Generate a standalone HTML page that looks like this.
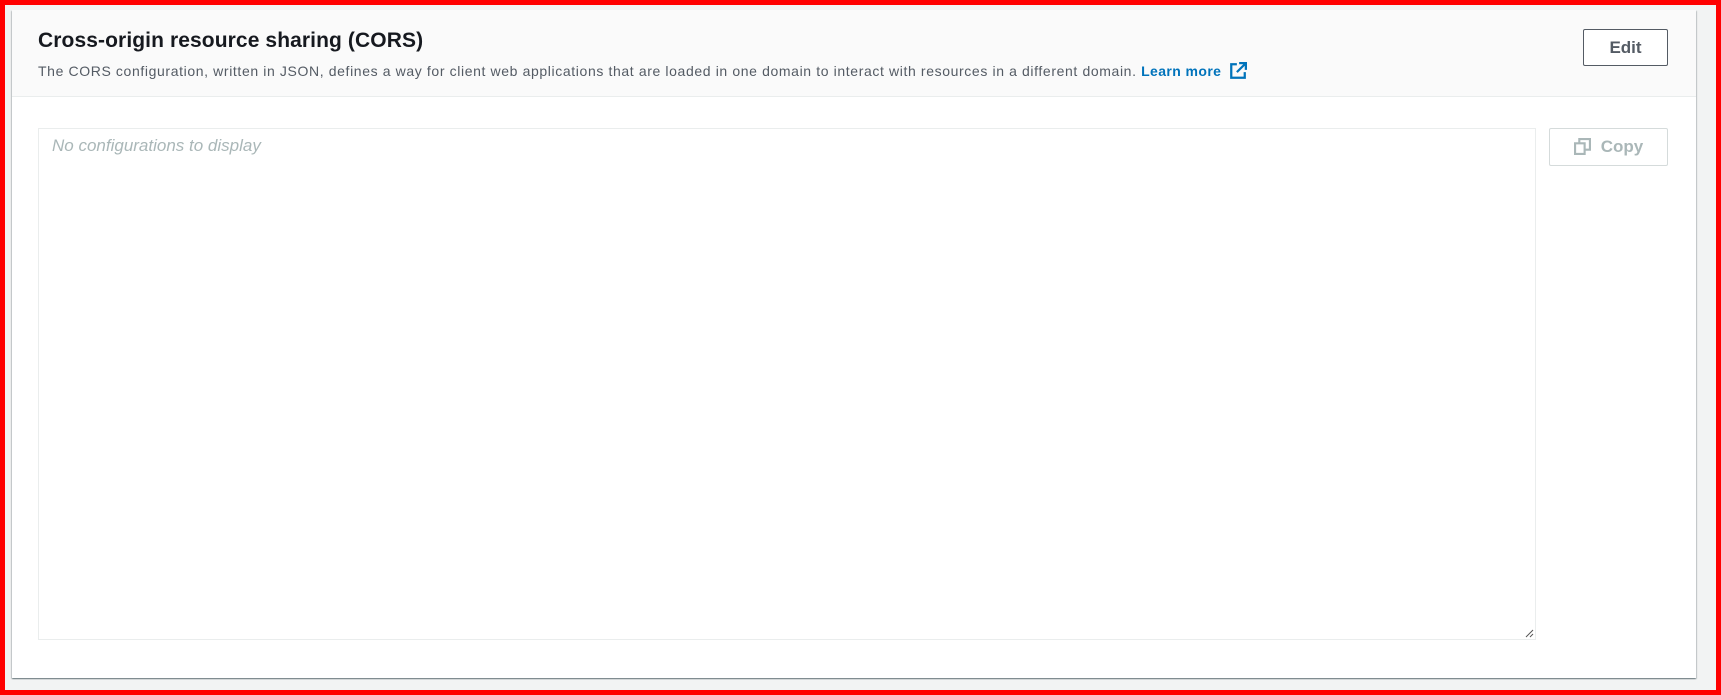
<!DOCTYPE html>
<html><head><meta charset="utf-8"><style>
*{box-sizing:border-box;margin:0;padding:0}
body{width:1721px;height:695px;overflow:hidden;background:#f2f3f3;font-family:"Liberation Sans",sans-serif;position:relative;border:5px solid #ff0000;}
.panel{position:absolute;left:7px;top:5px;width:1684px;height:668px;background:#fff;box-shadow:0 1px 1px 0 rgba(0,28,36,.4),1px 1px 1px 0 rgba(0,28,36,.15),-1px 1px 1px 0 rgba(0,28,36,.15);}
.head{position:absolute;left:0;top:0;width:100%;height:87px;background:#fafafa;border-bottom:1px solid #eaeded;}
h2{position:absolute;left:26px;top:19px;font-size:21px;font-weight:bold;color:#16191f;letter-spacing:0.1px}
.sub{position:absolute;left:26px;top:52px;font-size:14px;color:#545b64;letter-spacing:0.62px;white-space:nowrap}
.sub a{color:#0073bb;font-weight:bold;text-decoration:none;letter-spacing:0.4px}
.btn{position:absolute;border:1px solid #545b64;border-radius:2px;background:#fff;font-weight:bold;font-size:17px;color:#545b64;text-align:center}
.ta{position:absolute;left:26px;top:118px;width:1498px;height:512px;border:1px solid #eaeded;}
.ph{position:absolute;left:13px;top:7px;font-style:italic;color:#aab7b8;font-size:17px}
</style></head><body>
<div class="panel">
<div class="head">
<h2>Cross-origin resource sharing (CORS)</h2>
<div class="sub">The CORS configuration, written in JSON, defines a way for client web applications that are loaded in one domain to interact with resources in a different domain. <a>Learn more <svg width="18" height="18" viewBox="0 0 16 16" style="vertical-align:-4px;margin-left:3px"><path d="M7 2H2v12h12V9" fill="none" stroke="#0073bb" stroke-width="2"/><path d="M9 1h6v6M15 1L7 9" fill="none" stroke="#0073bb" stroke-width="2"/></svg></a></div>
<div class="btn" style="left:1571px;top:19px;width:85px;height:37px;line-height:35px">Edit</div>
</div>
<div class="ta"><div class="ph">No configurations to display</div>
<svg width="10" height="10" style="position:absolute;right:1px;bottom:1px"><path d="M9 2L2 9M9 6L6 9" stroke="#555" stroke-width="1"/></svg></div>
<div class="btn" style="left:1537px;top:118px;width:119px;height:38px;line-height:36px;border-color:#d5dbdb;color:#aab7b8"><svg width="17" height="17" viewBox="0 0 16 16" style="vertical-align:-3px;margin-right:10px"><rect x="1" y="5" width="9" height="10" fill="none" stroke="#aab7b8" stroke-width="2"/><path d="M5 5V1h10v10h-5" fill="none" stroke="#aab7b8" stroke-width="2"/></svg>Copy</div>
</div>
</body></html>
